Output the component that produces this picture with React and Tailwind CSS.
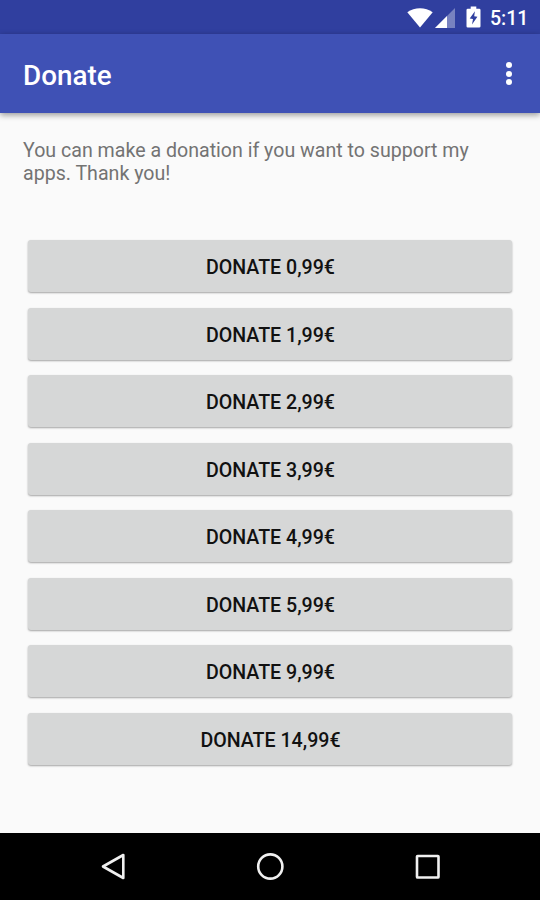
const PRICES = ['0,99€', '1,99€', '2,99€', '3,99€', '4,99€', '5,99€', '9,99€', '14,99€'];

function StatusBar() {
    return (
        <div className="flex h-[34px] items-center justify-end bg-[#303f9f] text-white">
            {/* Wifi */}
            <svg className="mt-px h-[20px] w-[26px]" viewBox="0 0 26 20" fill="currentColor">
                <path d="M0.3 4.2C7.5 -1.1 18.5 -1.1 25.7 4.2L13 19.5Z" />
            </svg>
            {/* Signal */}
            <svg className="mt-px ml-[2px] h-[20px] w-[20px]" viewBox="0 0 20 20" fill="currentColor">
                <path d="M0 20L20 0V20Z" opacity="0.35" />
                <path d="M0 20L12 8V20Z" />
            </svg>
            {/* Battery */}
            <svg className="ml-[11px] h-[22px] w-[15px]" viewBox="0 0 15 22" fill="currentColor">
                <path
                    fillRule="evenodd"
                    d="M4.7 0.5H10.3V2.7H13.2Q14.5 2.7 14.5 4V20.2Q14.5 21.5 13.2 21.5H1.8Q0.5 21.5 0.5 20.2V4Q0.5 2.7 1.8 2.7H4.7ZM8.9 5.2L3.7 12.6L7 13.1L6 18.6L11.4 10.8L8.2 10.3Z"
                />
            </svg>
            <span className="mr-[11.5px] ml-[8.5px] pt-[4px] text-[19.6px] leading-none font-medium">5:11</span>
        </div>
    );
}

function Toolbar() {
    return (
        <header className="relative flex h-[79px] items-center justify-between bg-[#3f51b5] pr-[28px] pl-[23px] text-white shadow-[0_2px_6px_rgba(0,0,0,0.4)]">
            <h1 className="pt-[4px] text-[27.8px] leading-none font-medium">Donate</h1>
            <button aria-label="More options" className="flex flex-col gap-[2.4px]">
                <span className="size-[6px] rounded-full bg-white" />
                <span className="size-[6px] rounded-full bg-white" />
                <span className="size-[6px] rounded-full bg-white" />
            </button>
        </header>
    );
}

function NavBar() {
    return (
        <nav className="h-[67px] bg-black text-[#f0f0f0]">
            <svg className="h-[67px] w-[540px]" viewBox="0 0 540 67" fill="none" stroke="currentColor" strokeWidth="2.6" strokeLinejoin="round">
                <path d="M123.3 22V45L103 33.5Z" />
                <circle cx="270.3" cy="33.5" r="12.1" />
                <rect x="417" y="23" width="21.5" height="21.5" rx="0.6" />
            </svg>
        </nav>
    );
}

export default function App() {
    return (
        <div className="flex h-[900px] w-[540px] flex-col bg-[#fafafa] font-['Roboto',sans-serif]">
            <StatusBar />
            <Toolbar />
            <main className="flex-1 px-[23px] pt-[26px]">
                <p className="text-[19.6px] leading-[23px] text-[#737373]">
                    You can make a donation if you want to support my
                    <br />
                    apps. Thank you!
                </p>
                <div className="mt-[55.3px] flex flex-col gap-[15.5px] px-[5px]">
                    {PRICES.map((price) => (
                        <button
                            key={price}
                            className="h-[52px] w-[484px] rounded-[3px] bg-[#d6d7d7] pt-[3px] pl-px text-[19.6px] leading-none font-medium text-[#111] shadow-[0_1px_2px_rgba(0,0,0,0.35)]"
                        >
                            DONATE {price}
                        </button>
                    ))}
                </div>
            </main>
            <NavBar />
        </div>
    );
}
